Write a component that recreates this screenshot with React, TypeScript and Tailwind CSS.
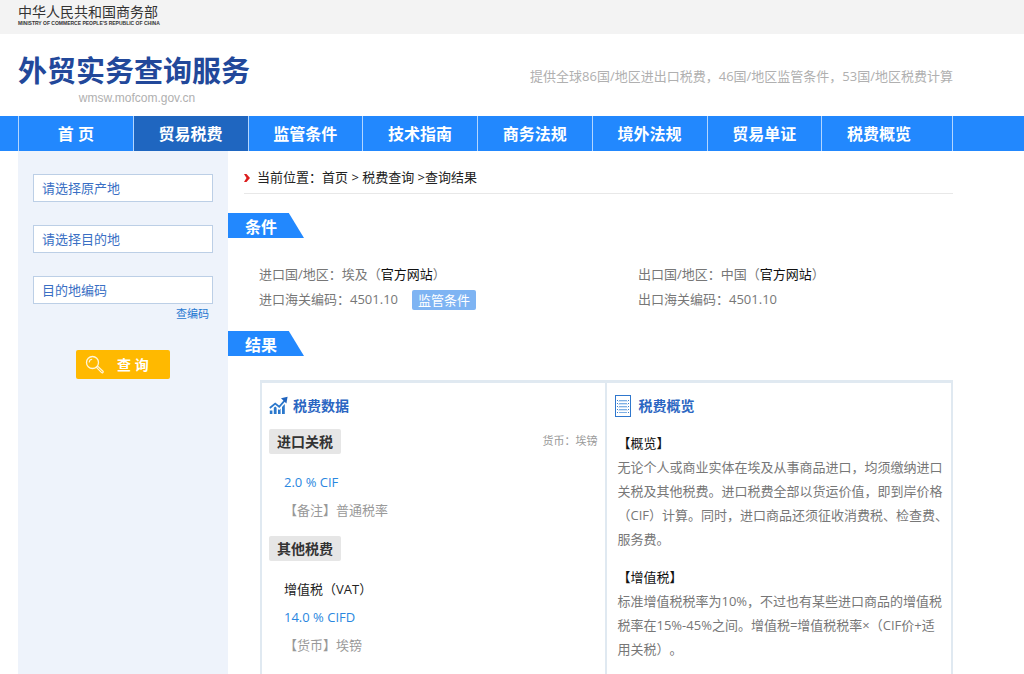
import type { ReactNode } from "react";

const navItems = [
  "首 页",
  "贸易税费",
  "监管条件",
  "技术指南",
  "商务法规",
  "境外法规",
  "贸易单证",
  "税费概览",
];

const fields = [
  { name: "origin", label: "请选择原产地" },
  { name: "destination", label: "请选择目的地" },
  { name: "code", label: "目的地编码" },
];

const SectionTab = ({ children }: { children: ReactNode }) => (
  <h2 className="flex h-[25px] w-[76px] items-center bg-[#2288fe] pl-[17px] pt-0.5 text-[16px] font-bold text-white [clip-path:polygon(0_0,80%_0,100%_100%,0_100%)]">
    {children}
  </h2>
);

const Badge = ({ children }: { children: ReactNode }) => (
  <h4 className="flex h-[25px] w-[72px] items-center justify-center rounded-xs bg-[#e6e6e6] text-[14px] font-bold text-[#333]">
    {children}
  </h4>
);

const ChartIcon = () => (
  <svg width="20" height="20" viewBox="0 0 20 20" fill="none" aria-hidden="true">
    <path d="M.8 12 6.2 7.6l4 3.2L15.6 4.6" stroke="#2b78cc" strokeWidth="1.8" />
    <path d="M12 2.2 18.6.8l-1.2 6.6z" fill="#2063bd" />
    <path
      d="M.8 14.4h2.6V18H.8zM4.8 11.8l1.4-1.2 1.4 1.2V18H4.8zM9 13.2l1.3.8 1.3-1.4V18H9zM13 11l2.8-3V18H13z"
      fill="#2b78cc"
    />
  </svg>
);

const ListIcon = () => (
  <svg width="16" height="22" viewBox="0 0 16 22" fill="none" aria-hidden="true">
    <rect x="0.5" y="0.5" width="15" height="21" stroke="#2f77cd" />
    <path d="M4 5.5h8M4 8.5h8M4 11.5h8M4 14.5h8M4 17.5h8" stroke="#7fb0e4" />
    <path d="M2 5.5h1M2 8.5h1M2 11.5h1M2 14.5h1M2 17.5h1M13 5.5h1M13 8.5h1M13 11.5h1M13 14.5h1M13 17.5h1" stroke="#3b80d0" />
    <path d="M3 6.5h10M3 9.5h10M3 12.5h10M3 15.5h10" stroke="#d3e4f6" />
  </svg>
);

const SearchIcon = () => (
  <svg width="20" height="20" viewBox="0 0 20 20" fill="none" stroke="#fff6dc" aria-hidden="true">
    <circle cx="7.5" cy="7.5" r="6" strokeWidth="1.3" />
    <path d="M4.2 7.5a3.3 3.3 0 0 1 3-3.2" strokeWidth="1.1" />
    <path d="M11.6 12.6l1.2-1.2 5.2 4.8c.8.8-.5 2.2-1.4 1.4z" strokeWidth="1.2" />
  </svg>
);

const Sidebar = () => (
  <aside className="w-[210px] shrink-0 bg-[#eef3fb] px-[15px] pt-[23px]">
    <form>
      <div className="flex flex-col gap-[23px]">
        {fields.map((field) => (
          <input
            key={field.name}
            type="text"
            name={field.name}
            aria-label={field.label}
            placeholder={field.label}
            className="h-7 w-full border border-[#bccfe6] bg-white px-2 text-[13px] text-[#3a6fc4] placeholder:text-[#3a6fc4] outline-none"
          />
        ))}
      </div>
      <a href="#" className="mr-1 block text-right text-[11px] leading-5 text-[#1f78d1]">
        查编码
      </a>
      <button
        type="submit"
        className="mx-auto mt-[26px] flex h-[29px] w-[94px] items-center rounded-xs bg-[#ffb900] pl-[9px] text-[14px] font-bold text-white"
      >
        <SearchIcon />
        <span className="ml-3">查 询</span>
      </button>
    </form>
  </aside>
);

const Conditions = () => (
  <div className="grid grid-cols-[379fr_315fr] pt-6 pl-[31px] text-[13px] leading-[25px] text-[#777]">
    <div>
      <p>
        进口国/地区：埃及（<a href="#" className="text-[#111]">官方网站</a>）
      </p>
      <p className="flex items-center">
        进口海关编码：4501.10
        <button type="button" className="ml-3.5 h-5 rounded-xs bg-[#7eb4f3] px-1.5 leading-5 text-white">
          监管条件
        </button>
      </p>
    </div>
    <div>
      <p>
        出口国/地区：中国（<a href="#" className="text-[#111]">官方网站</a>）
      </p>
      <p>出口海关编码：4501.10</p>
    </div>
  </div>
);

const TaxData = () => (
  <section className="border-r-2 border-[#e0e9f1] px-[7px] pt-[11px]">
    <h3 className="flex items-center gap-1 text-[14px] leading-6 font-bold text-[#2b66c2]">
      <ChartIcon />
      税费数据
    </h3>
    <div className="mt-[11px] flex items-center justify-between">
      <Badge>进口关税</Badge>
      <span className="text-[11px] text-[#999]">货币：埃镑</span>
    </div>
    <div className="px-[15px] pt-3.5 text-[13px] leading-7">
      <p className="text-[#2a87e0]">2.0 % CIF</p>
      <p className="text-[#999]">【备注】普通税率</p>
    </div>
    <div className="mt-3">
      <Badge>其他税费</Badge>
    </div>
    <div className="px-[15px] pt-3.5 text-[13px] leading-7">
      <p className="text-[#222]">增值税（VAT）</p>
      <p className="text-[#2a87e0]">14.0 % CIFD</p>
      <p className="text-[#999]">【货币】埃镑</p>
    </div>
  </section>
);

const TaxOverview = () => (
  <section className="pt-[11px] pl-2">
    <h3 className="flex items-center gap-2 text-[14px] leading-6 font-bold text-[#2b66c2]">
      <ListIcon />
      税费概览
    </h3>
    <div className="pt-[13px] pl-[3px] text-[13px] leading-6 text-[#777]">
      <h4 className="text-[#111]">【概览】</h4>
      <p>
        无论个人或商业实体在埃及从事商品进口，均须缴纳进口关税及其他税费。进口税费全部以货运价值，即到岸价格（CIF）计算。同时，进口商品还须征收消费税、检查费、服务费。
      </p>
      <h4 className="mt-3.5 text-[#111]">【增值税】</h4>
      <p className="pr-1">
        标准增值税税率为10%，不过也有某些进口商品的增值税税率在15%-45%之间。增值税=增值税税率×（CIF价+适用关税）。
      </p>
    </div>
  </section>
);

const App = () => {
  return (
    <div
      lang="zh-CN"
      className="flex min-h-screen flex-col bg-white font-['Open_Sans','Noto_Sans_CJK_SC',sans-serif] [text-spacing-trim:space-all]"
    >
      <div className="h-[34px] bg-[#f3f3f3] pt-1 pl-[18px]">
        <p className="text-[14px] leading-4 text-[#333]">中华人民共和国商务部</p>
        <p className="font-['Liberation_Sans',sans-serif] text-[5px] leading-[6px] font-bold text-[#333]">
          MINISTRY OF COMMERCE PEOPLE'S REPUBLIC OF CHINA
        </p>
      </div>

      <header className="flex h-[82px] items-start justify-between pr-[71px] pl-[18px]">
        <div className="pt-[17px]">
          <h1 className="text-[29px] leading-10 font-bold text-[#22489a]">外贸实务查询服务</h1>
          <p className="pl-1.5 text-center font-['Liberation_Sans',sans-serif] text-[12px] leading-[14px] text-[#b0b0b0]">
            wmsw.mofcom.gov.cn
          </p>
        </div>
        <p className="pt-8 text-[13px] leading-5 text-[#b0b0b0]">
          提供全球86国/地区进出口税费，46国/地区监管条件，53国/地区税费计算
        </p>
      </header>

      <nav className="bg-[#2288fe] pr-[71px] pl-[18px]">
        <ul className="flex border-r border-[#b3d6ff] pr-4">
          {navItems.map((item, i) => (
            <li key={item} className="flex-1 border-l border-[#b3d6ff]">
              <a
                href="#"
                className={`block h-[35px] text-center text-[16px] leading-9 font-bold text-white ${
                  i === 1 ? "bg-[#1f66c0]" : ""
                }`}
              >
                {item}
              </a>
            </li>
          ))}
        </ul>
      </nav>

      <div className="flex flex-1 pr-[71px] pl-[18px]">
        <Sidebar />
        <main className="flex min-w-0 flex-1 flex-col">
          <div className="ml-4 flex h-[43px] items-center gap-[7px] border-b border-[#e8e8e8] pt-3 text-[13px] text-[#222]">
            <svg width="6" height="8" viewBox="0 0 6 8" aria-hidden="true">
              <path d="M0 0h2.5L6 4 2.5 8H0l2.5-4z" fill="#dc1c1c" />
            </svg>
            <p>
              当前位置：<a href="#">首页</a> &gt; <a href="#">税费查询</a> &gt;查询结果
            </p>
          </div>
          <div className="mt-[19px]">
            <SectionTab>条件</SectionTab>
          </div>
          <Conditions />
          <div className="mt-[19px]">
            <SectionTab>结果</SectionTab>
          </div>
          <div className="mt-6 ml-8 grid flex-1 grid-cols-2 border-x-2 border-t-3 border-[#e0e9f1]">
            <TaxData />
            <TaxOverview />
          </div>
        </main>
      </div>
    </div>
  );
};

export default App;
